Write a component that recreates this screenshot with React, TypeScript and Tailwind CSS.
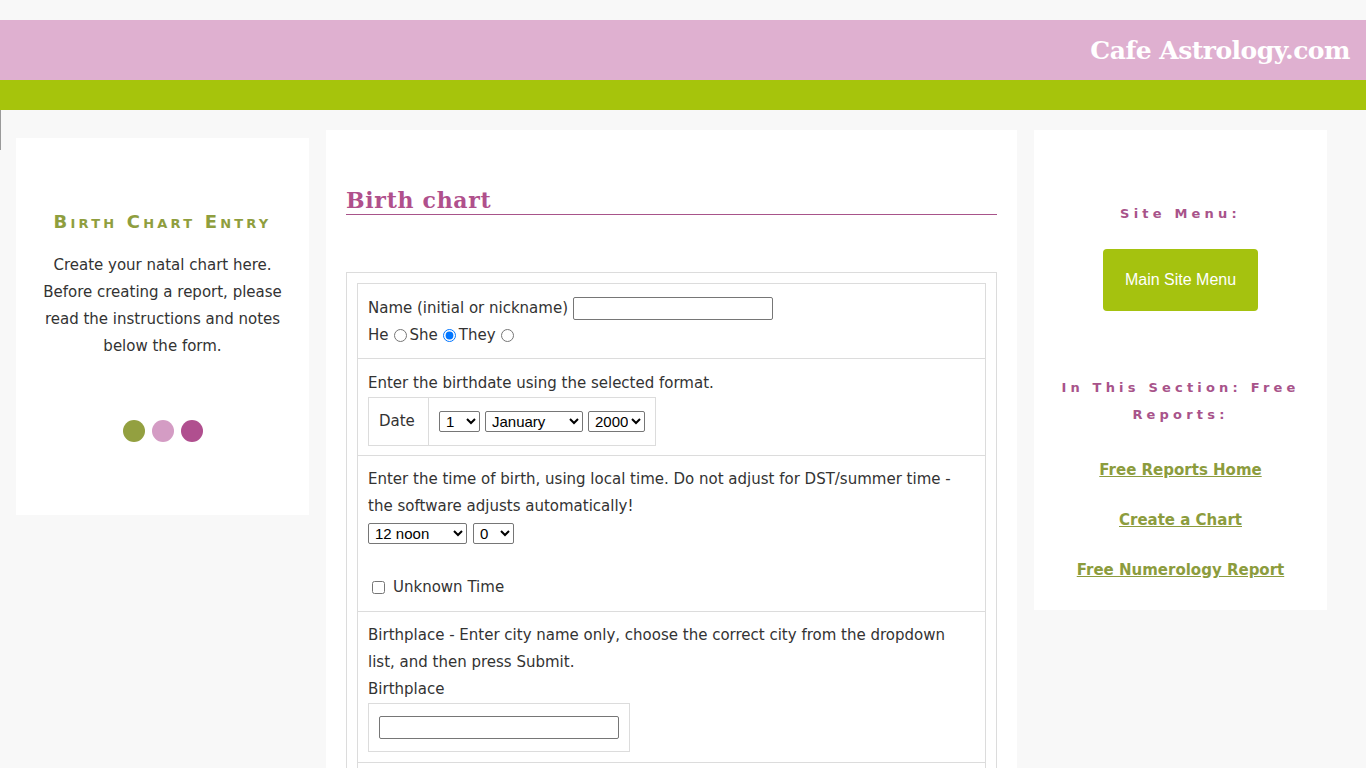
import React from "react";

const body = "font-['DejaVu_Sans',Verdana,sans-serif]";

function Dots() {
  return (
    <div className="flex justify-center gap-[7px]">
      <span className="block w-[22px] h-[22px] rounded-full bg-[#93a040]" />
      <span className="block w-[22px] h-[22px] rounded-full bg-[#d49cc4]" />
      <span className="block w-[22px] h-[22px] rounded-full bg-[#b04f8f]" />
    </div>
  );
}

const selectCls =
  "h-[21px] border border-[#767676] rounded-[2px] bg-white text-[15px] text-black font-['Liberation_Sans',Arial,sans-serif] pl-[2px]";

export default function App() {
  const days = Array.from({ length: 31 }, (_, i) => i + 1);
  const months = [
    "January", "February", "March", "April", "May", "June",
    "July", "August", "September", "October", "November", "December",
  ];
  return (
    <div className={`min-h-screen bg-[#f8f8f8] ${body} text-[#333]`}>
      <div className="h-[20px]" />
      <header className="h-[60px] bg-[#dfb0d0] flex items-center justify-end pr-[16px]">
        <span className="text-white font-bold text-[25px] font-['DejaVu_Serif',Georgia,serif] tracking-[-0.5px] mt-[2px]">
          Cafe Astrology.com
        </span>
      </header>
      <div className="h-[30px] bg-[#a6c40c]" />

      <div className="flex items-start gap-[17px] pl-[16px] pt-[20px] relative">
        <span className="absolute left-0 top-0 w-px h-[40px] bg-[#9a9a9a]" />

        {/* left column */}
        <aside className="w-[293px] mt-[8px] bg-white pt-[72px] pb-[73px] px-[14px] text-center">
          <h3 className="[font-variant:small-caps] font-bold text-[18px] tracking-[3.2px] text-[#8f9e3e] leading-[24px]">
            Birth Chart Entry
          </h3>
          <p className="mt-[18px] text-[15px] leading-[27px]">
            Create your natal chart here. Before creating a report, please read the instructions and notes below the form.
          </p>
          <div className="mt-[60px]">
            <Dots />
          </div>
        </aside>

        {/* main column */}
        <main className="w-[691px] bg-white px-[20px] pt-[56px] pb-[20px] min-h-[650px]">
          <h1 className="font-['DejaVu_Serif',Georgia,serif] font-bold text-[22px] tracking-[0.7px] text-[#b0508c] leading-[28px] border-b border-[#a8538a]">
            Birth chart
          </h1>

          <div className="mt-[57px] border border-[#dcdcdc] p-[10px] text-[15px] leading-[27px]">
            <div className="border border-[#dcdcdc]">
              {/* name */}
              <div className="px-[10px] pt-[11px] pb-[9px] border-b border-[#dcdcdc]">
                <div className="flex items-center gap-[5px]">
                  <span>Name (initial or nickname)</span>
                  <input
                    type="text"
                    className="w-[200px] h-[23px] border border-[#767676] rounded-[2px] bg-white"
                  />
                </div>
                <div className="flex items-center">
                  <span>He</span>
                  <input type="radio" name="pr" className="ml-[5px] mr-[3px] w-[13px] h-[13px]" />
                  <span>She</span>
                  <input type="radio" name="pr" defaultChecked className="ml-[5px] mr-[3px] w-[13px] h-[13px]" />
                  <span>They</span>
                  <input type="radio" name="pr" className="ml-[5px] mr-[3px] w-[13px] h-[13px]" />
                </div>
              </div>

              {/* date */}
              <div className="px-[10px] pt-[11px] pb-[9px] border-b border-[#dcdcdc]">
                <div>Enter the birthdate using the selected format.</div>
                <div className="inline-flex border border-[#dcdcdc] h-[49px]">
                  <div className="w-[60px] flex items-center px-[10px] border-r border-[#dcdcdc]">Date</div>
                  <div className="flex items-center gap-[5px] px-[10px]">
                    <select className={`${selectCls} w-[41px]`} defaultValue="1">
                      {days.map((d) => (
                        <option key={d}>{d}</option>
                      ))}
                    </select>
                    <select className={`${selectCls} w-[98px]`} defaultValue="January">
                      {months.map((m) => (
                        <option key={m}>{m}</option>
                      ))}
                    </select>
                    <select className={`${selectCls} w-[57px]`} defaultValue="2000">
                      <option>1999</option>
                      <option>2000</option>
                      <option>2001</option>
                    </select>
                  </div>
                </div>
              </div>

              {/* time */}
              <div className="px-[10px] pt-[10px] pb-[10px] border-b border-[#dcdcdc]">
                <div>
                  Enter the time of birth, using local time. Do not adjust for DST/summer time - the software adjusts automatically!
                </div>
                <div className="flex items-center gap-[6px] mt-[3px]">
                  <select className={`${selectCls} w-[99px]`} defaultValue="12 noon">
                    <option>11 am</option>
                    <option>12 noon</option>
                    <option>1 pm</option>
                  </select>
                  <select className={`${selectCls} w-[41px]`} defaultValue="0">
                    <option>0</option>
                    <option>15</option>
                    <option>30</option>
                    <option>45</option>
                  </select>
                </div>
                <label className="flex items-center mt-[30px] pl-[4px] gap-[8px]">
                  <input type="checkbox" className="w-[13px] h-[13px]" />
                  <span>Unknown Time</span>
                </label>
              </div>

              {/* place */}
              <div className="px-[10px] pt-[10px] pb-[10px] border-b border-[#dcdcdc]">
                <div>
                  Birthplace - Enter city name only, choose the correct city from the dropdown list, and then press Submit.
                </div>
                <div>Birthplace</div>
                <div className="w-[262px] h-[49px] border border-[#dcdcdc] flex items-center px-[10px]">
                  <input
                    type="text"
                    className="w-[240px] h-[23px] border border-[#767676] rounded-[2px] bg-white"
                  />
                </div>
              </div>
              <div className="h-[60px]" />
            </div>
          </div>
        </main>

        {/* right column */}
        <aside className="w-[293px] bg-white pt-[75px] pb-[26px] px-[16px] text-center">
          <h4 className="text-[13px] font-bold tracking-[4.2px] text-[#a8538a] leading-[18px]">Site Menu:</h4>
          <div className="mt-[26px] flex justify-center">
            <a className="w-[155px] h-[62px] rounded-[4px] bg-[#a5c20f] text-white text-[16px] font-['Liberation_Sans',Arial,sans-serif] flex items-center justify-center">
              Main Site Menu
            </a>
          </div>
          <h4 className="mt-[63px] text-[13px] font-bold tracking-[4.2px] text-[#a8538a] leading-[27px]">
            In This Section: Free Reports:
          </h4>
          <ul className="mt-[29px] flex flex-col gap-[23px] text-[15px] font-bold leading-[27px]">
            <li><a className="underline text-[#8c9c3d]">Free Reports Home</a></li>
            <li><a className="underline text-[#8c9c3d]">Create a Chart</a></li>
            <li><a className="underline text-[#8c9c3d]">Free Numerology Report</a></li>
          </ul>
        </aside>
      </div>
    </div>
  );
}
